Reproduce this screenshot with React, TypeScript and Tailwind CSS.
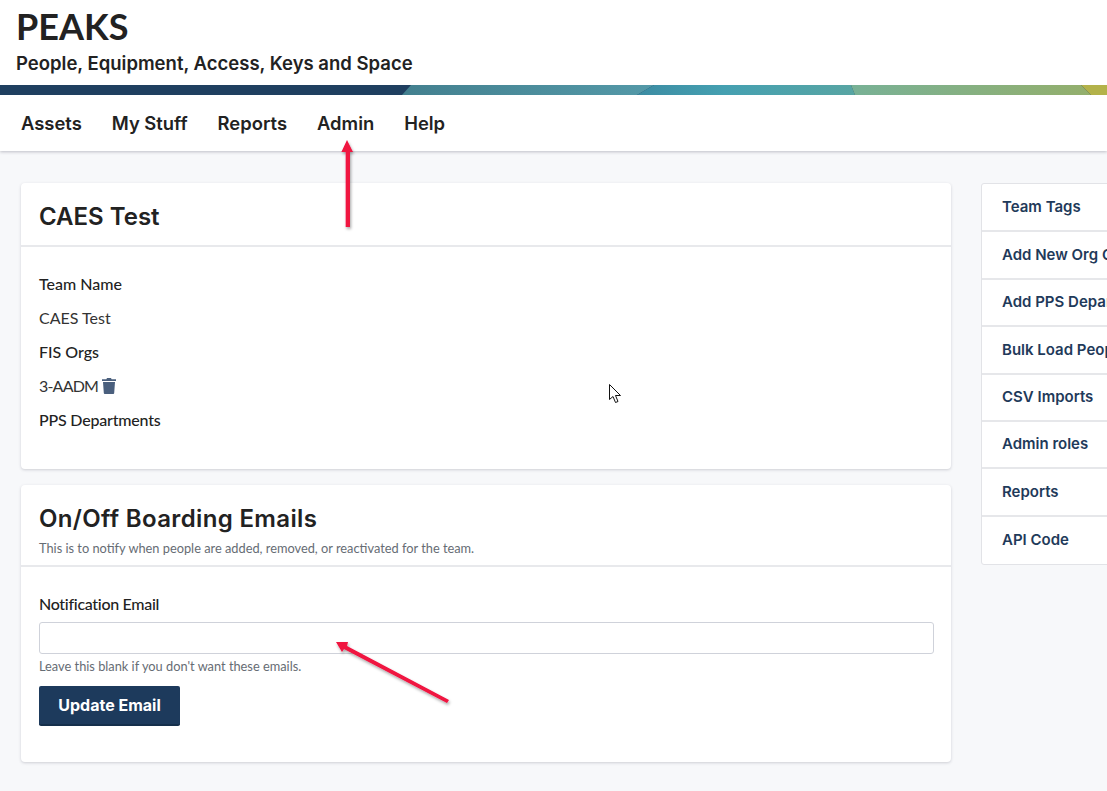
export default function App() {
  const links = ["Team Tags", "Add New Org Group", "Add PPS Departments", "Bulk Load People", "CSV Imports", "Admin roles", "Reports", "API Code"];
  return (
    <div className="relative h-[791px] w-[1107px] overflow-hidden bg-[#f7f8fa] font-['Lato','Liberation_Sans',sans-serif] text-[#222222]">
      <header className="h-[85px] bg-white pl-4 pt-[6px]">
        <h1 className="text-[36px] leading-[40px] font-bold">PEAKS</h1>
        <p className="mt-[4px] font-['Inter',sans-serif] text-[18.500px] leading-[26px] font-semibold">People, Equipment, Access, Keys and Space</p>
      </header>
      <svg className="block h-[10px] w-[1107px]" viewBox="0 0 1107 10" preserveAspectRatio="none" aria-hidden="true">
        <defs>
          <linearGradient id="seg2" x1="0" x2="1" y1="0" y2="0">
            <stop offset="0" stopColor="#43808f" />
            <stop offset="1" stopColor="#5499a8" />
          </linearGradient>
          <linearGradient id="seg3" x1="0" x2="1" y1="0" y2="0">
            <stop offset="0" stopColor="#3c8ca3" />
            <stop offset="0.4" stopColor="#45a0b1" />
            <stop offset="1" stopColor="#58a5a3" />
          </linearGradient>
          <linearGradient id="seg4" x1="0" x2="1" y1="0" y2="0">
            <stop offset="0" stopColor="#78b196" />
            <stop offset="1" stopColor="#94af6c" />
          </linearGradient>
        </defs>
        <rect width="1107" height="10" fill="#1f3f60" />
        <polygon points="411,0 654,0 637,10 402,10" fill="url(#seg2)" />
        <polygon points="654,0 851,0 855,10 637,10" fill="url(#seg3)" />
        <polygon points="851,0 1081,0 1091,10 855,10" fill="url(#seg4)" />
        <polygon points="1081,0 1107,0 1107,10 1091,10" fill="#b3b24a" />
      </svg>
      <nav className="flex h-[56px] items-center gap-[30px] bg-white pl-[21px] pt-[2px] font-['Inter',sans-serif] text-[18.400px] font-semibold text-[#222222] shadow-[0_1px_3px_rgba(60,60,80,0.3)]">
        <span>Assets</span>
        <span>My Stuff</span>
        <span>Reports</span>
        <span>Admin</span>
        <span>Help</span>
      </nav>
      <main className="flex items-start gap-[30px] pl-[21px] pt-[32px]">
        <div className="flex w-[930px] shrink-0 flex-col gap-4">
          <section className="h-[286px] rounded-[4px] bg-white shadow-[0_1px_3px_rgba(60,60,80,0.22)]">
            <div className="flex h-[64px] items-center border-b-2 border-[#e8e9ec] px-[18px] pt-[6px]">
              <h2 className="font-['Inter',sans-serif] text-[24px] font-semibold">CAES Test</h2>
            </div>
            <div className="px-[18px] pt-[20px] text-[16px] leading-[34px]">
              <p className="font-medium">Team Name</p>
              <p className="text-[#333]">CAES Test</p>
              <p className="font-medium">FIS Orgs</p>
              <p className="flex items-center gap-[4px] text-[#333]">
                <span className="tracking-[-0.8px]">3-AADM</span>
                <svg width="14" height="16" viewBox="0 0 14 16" aria-hidden="true">
                  <path fill="#4a5f7d" d="M5 0h4l.6 1.2H14V3H0V1.200h4.400zM1 4h12l-.8 11a1 1 0 0 1-1 1H2.800a1 1 0 0 1-1-1z" />
                </svg>
              </p>
              <p className="font-medium tracking-[-0.2px]">PPS Departments</p>
            </div>
          </section>
          <section className="h-[277px] rounded-[4px] bg-white shadow-[0_1px_3px_rgba(60,60,80,0.22)]">
            <div className="h-[82px] border-b-2 border-[#e8e9ec] px-[18px] pt-[18px]">
              <h2 className="font-['Inter',sans-serif] text-[24px] leading-[32px] font-semibold tracking-[0.35px]">On/Off Boarding Emails</h2>
              <p className="mt-[5px] text-[12.800px] leading-[16px] text-[#666c74]">This is to notify when people are added, removed, or reactivated for the team.</p>
            </div>
            <div className="px-[18px] pt-[26px]">
              <label className="block text-[16px] leading-[22px] font-medium tracking-[-0.3px]">Notification Email</label>
              <input className="mt-[7px] block h-[32px] w-[895px] rounded-[3px] border border-[#cfd2da] bg-white" />
              <p className="mt-[4px] text-[12.800px] leading-[16px] text-[#666c74]">Leave this blank if you don't want these emails.</p>
              <button className="mt-[12px] h-[40px] w-[141px] rounded-[2px] border-b-2 border-[#152f4b] bg-[#1d3a5c] font-['Inter',sans-serif] text-[16px] font-bold text-white">Update Email</button>
            </div>
          </section>
        </div>
        <aside className="w-[240px] shrink-0 rounded-[3px] border border-[#e2e3e7] bg-white pt-px font-['Inter',sans-serif] text-[15px] font-semibold text-[#1f3a5a]">
          {links.map((l, i) => (
            <div key={l} className={`flex h-[47.400px] items-center whitespace-nowrap pl-5 ${i < 7 ? "border-b-2 border-[#e6e7ea]" : ""}`}>{l}</div>
          ))}
        </aside>
      </main>
      <svg className="absolute top-0 left-0 h-[791px] w-[1107px]" viewBox="0 0 1107 791" aria-hidden="true">
        <defs>
          <filter id="as" x="-50%" y="-50%" width="200%" height="200%">
            <feDropShadow dx="1" dy="2" stdDeviation="1.500" floodColor="#000" floodOpacity="0.35" />
          </filter>
        </defs>
        <g filter="url(#as)" fill="#f0123f">
          <polygon points="345.700,227 350,227 350,152 353,152 347,140 341.400,152 345.700,152" />
          <polygon points="449,700 447,703 344,649 342,652 336,642 348,642 347,646" />
        </g>
        <path d="M609.500 384.500v15l3.500-3 2.500 6 2.500-1-2.500-6h5z" fill="#fff" stroke="#111" strokeWidth="1" />
      </svg>
    </div>
  );
}
